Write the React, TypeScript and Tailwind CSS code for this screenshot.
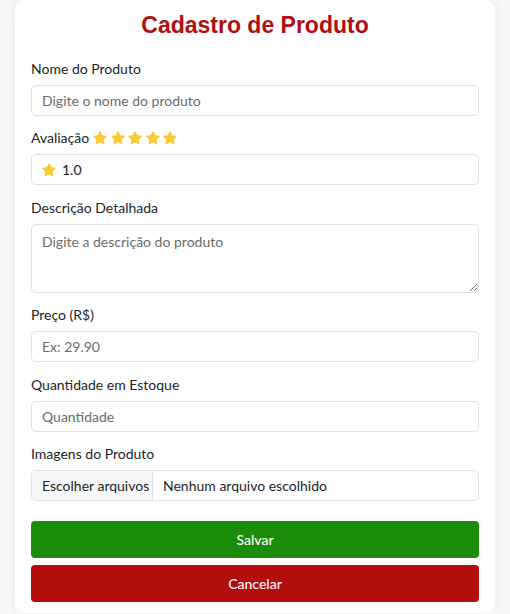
import { useState } from "react";

const Star = ({ size = 16 }: { size?: number }) => (
  <svg width={size} height={size} viewBox="0 0 24 24" className="shrink-0">
    <path
      d="M12 2.2c.5 0 .9.3 1.1.7l2.4 4.9 5.4.8c.9.1 1.3 1.3.6 1.9l-3.9 3.8.9 5.4c.2.9-.8 1.6-1.6 1.2L12 18.3l-4.9 2.6c-.8.4-1.8-.3-1.6-1.2l.9-5.4-3.9-3.8c-.7-.6-.3-1.8.6-1.9l5.4-.8 2.4-4.9c.2-.4.6-.7 1.1-.7z"
      fill="#fcc934"
    />
  </svg>
);

const Field = ({ label, children }: { label: React.ReactNode; children: React.ReactNode }) => (
  <div className="mb-[12.4px]">
    <div className="mb-[6px] flex h-5 items-center text-[14px] leading-5 text-[#212529]">{label}</div>
    {children}
  </div>
);

const inputCls =
  "block h-[31px] w-full rounded-[5px] border border-[#dee2e6] bg-white px-[10px] text-[14px] text-[#212529] outline-none placeholder:text-[#6c6c6c]";

export default function App() {
  const [rating] = useState(1);

  return (
    <div className="min-h-screen bg-[#f7f8fa] px-[15px] font-['Lato',sans-serif]">
      <div className="mx-auto max-w-[480px] rounded-[10px] bg-white px-4 pt-[10px] pb-[11px] shadow-[0_0_12px_rgba(0,0,0,0.06)]">
        <h1 className="mb-[19px] text-center font-['Liberation_Sans',Arial,sans-serif] text-[23px] font-bold leading-[30px] text-[#b00e0e]">
          Cadastro de Produto
        </h1>

        <Field label="Nome do Produto">
          <input className={inputCls} placeholder="Digite o nome do produto" />
        </Field>

        <Field
          label={
            <>
              <span className="mr-[3px]">Avaliação</span>
              <span className="flex gap-[1.5px]">
                {[1, 2, 3, 4, 5].map((i) => (
                  <Star key={i} />
                ))}
              </span>
            </>
          }
        >
          <div className="flex h-[31px] w-full items-center gap-[5px] rounded-[5px] border border-[#dee2e6] bg-white px-[9px] text-[14px] text-[#212529]">
            <Star />
            <span>{rating.toFixed(1)}</span>
          </div>
        </Field>

        <Field label="Descrição Detalhada">
          <textarea
            className="block h-[69px] w-full rounded-[5px] border border-[#dee2e6] bg-white px-[10px] py-[6px] text-[14px] text-[#212529] outline-none placeholder:text-[#6c6c6c]"
            placeholder="Digite a descrição do produto"
          />
        </Field>

        <Field label="Preço (R$)">
          <input className={inputCls} placeholder="Ex: 29.90" />
        </Field>

        <Field label="Quantidade em Estoque">
          <input className={inputCls} placeholder="Quantidade" />
        </Field>

        <Field label="Imagens do Produto">
          <div className="flex h-[31px] w-full overflow-hidden rounded-[5px] border border-[#dee2e6] bg-white text-[14px] text-[#212529]">
            <div className="flex w-[121px] shrink-0 items-center whitespace-nowrap border-r border-[#dee2e6] bg-[#f6f7f9] px-[10px]">
              Escolher arquivos
            </div>
            <div className="flex items-center whitespace-nowrap px-[10px]">Nenhum arquivo escolhido</div>
          </div>
        </Field>

        <div className="mt-[20px] flex flex-col gap-[7px]">
          <button className="h-[37px] w-full rounded-[4px] bg-[#1a8c0a] text-[14px] font-medium text-white">
            Salvar
          </button>
          <button className="h-[37px] w-full rounded-[4px] bg-[#b30e0e] text-[14px] font-medium text-white">
            Cancelar
          </button>
        </div>
      </div>
    </div>
  );
}
